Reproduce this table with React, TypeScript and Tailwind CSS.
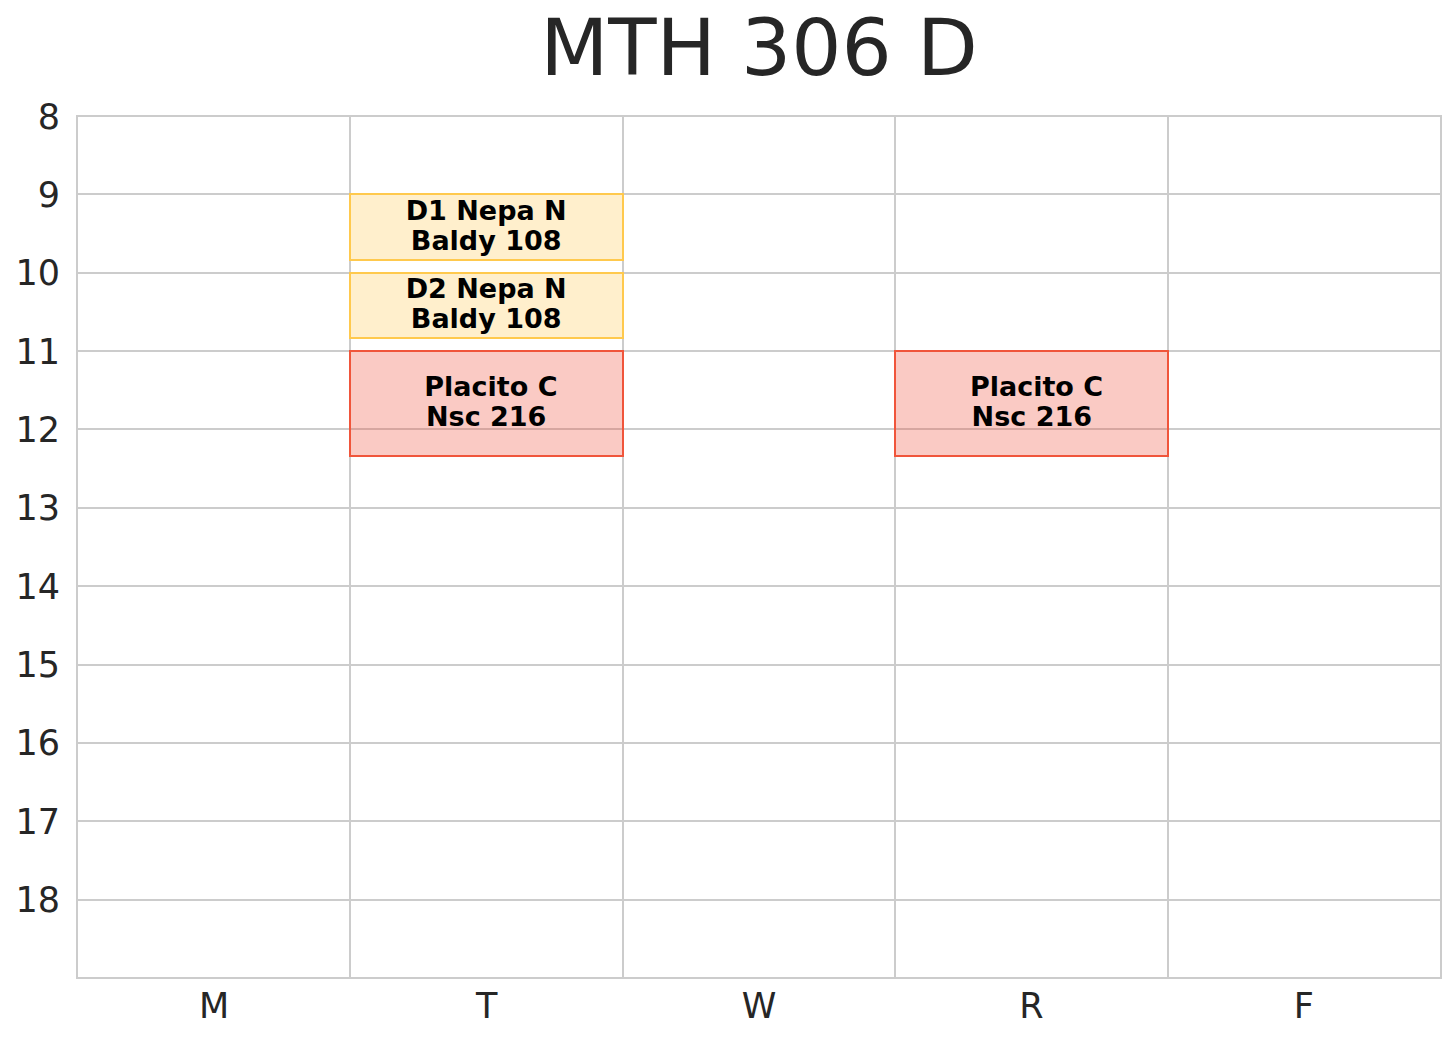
const hours = [8, 9, 10, 11, 12, 13, 14, 15, 16, 17, 18]
const days = ["M", "T", "W", "R", "F"]

const COL = 1364 / 5
const ROW = 862 / 11

const events = [
  { day: 1, start: 9, dur: 50 / 60, lines: ["D1 Nepa N", "Baldy 108"], kind: "lab" },
  { day: 1, start: 10, dur: 50 / 60, lines: ["D2 Nepa N", "Baldy 108"], kind: "lab" },
  { day: 1, start: 11, dur: 80 / 60, lines: [" Placito C", "Nsc 216"], kind: "lec" },
  { day: 3, start: 11, dur: 80 / 60, lines: [" Placito C", "Nsc 216"], kind: "lec" },
]

export default function App() {
  return (
    <div className="w-[1456px] h-[1040px] bg-white font-['DejaVu_Sans',sans-serif] text-[#262626]">
      <div className="h-[115px] pt-[9px] pl-[76px]">
        <h1 className="w-[1366px] text-center text-[79px] leading-[79px]">MTH 306 D</h1>
      </div>

      <div className="flex">
        <div className="w-[76px] h-[864px] py-[1px] pr-[16px] grid grid-rows-[repeat(11,1fr)]">
          {hours.map((h) => (
            <div key={h} className="h-0 flex items-center justify-end">
              <span className="text-[35px] leading-[35px] translate-y-[1px]">{h}</span>
            </div>
          ))}
        </div>

        <div className="relative w-[1366px] h-[864px] bg-[#cccccc] p-[2px] grid grid-cols-5 grid-rows-[repeat(11,1fr)] gap-[2px]">
          {Array.from({ length: 55 }).map((_, i) => (
            <div key={i} className="bg-white" />
          ))}
          {events.map((ev, i) => (
            <div
              key={i}
              className={`absolute border-2 flex items-center justify-center pb-[3px] ${
                ev.kind === "lab"
                  ? "bg-[#ffefcc] border-[#ffc94d]"
                  : "bg-[rgba(238,80,58,0.3)] border-[#f0553b]"
              }`}
              style={{
                left: ev.day * COL,
                top: (ev.start - 8) * ROW,
                width: COL + 2,
                height: ev.dur * ROW + 2,
              }}
            >
              <div className="text-center whitespace-pre font-bold text-black text-[27px] leading-[30px]">
                {ev.lines.map((l) => (
                  <div key={l}>{l}</div>
                ))}
              </div>
            </div>
          ))}
        </div>
      </div>

      <div className="ml-[76px] w-[1366px] px-[2px] pt-[10px] grid grid-cols-5">
        {days.map((d) => (
          <div key={d} className="text-center text-[35px] leading-[35px]">{d}</div>
        ))}
      </div>
    </div>
  )
}
